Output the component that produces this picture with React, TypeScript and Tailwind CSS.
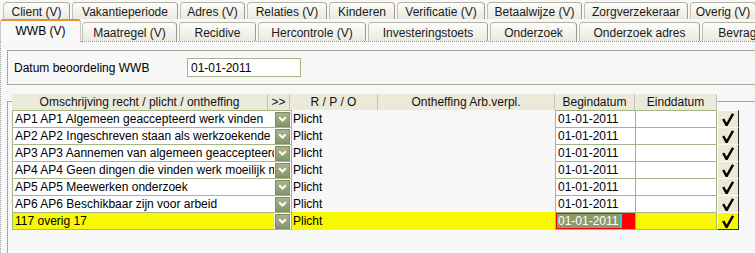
import React from 'react'
import clsx from 'clsx'

const topTabs = [
  { label: 'Client (V)', w: 'w-[67px]' },
  { label: 'Vakantieperiode', w: 'w-[106px]' },
  { label: 'Adres (V)', w: 'w-[65px]' },
  { label: 'Relaties (V)', w: 'w-[80px]' },
  { label: 'Kinderen', w: 'w-[66px]' },
  { label: 'Verificatie (V)', w: 'w-[88px]' },
  { label: 'Betaalwijze (V)', w: 'w-[95px]' },
  { label: 'Zorgverzekeraar', w: 'w-[104px]' },
  { label: 'Overig (V)', w: 'w-[66px]' },
]

const subTabs = [
  { label: 'Maatregel (V)', w: 'w-[95px]' },
  { label: 'Recidive', w: 'w-[77px]' },
  { label: 'Hercontrole (V)', w: 'w-[108px]' },
  { label: 'Investeringstoets', w: 'w-[120px]' },
  { label: 'Onderzoek', w: 'w-[87px]' },
  { label: 'Onderzoek adres', w: 'w-[121px]' },
  { label: 'Bevragingen', w: 'w-[100px]' },
]

const columns = [
  { label: 'Omschrijving recht / plicht / ontheffing', w: 'w-[256px]' },
  { label: '>>', w: 'w-[22px]' },
  { label: 'R / P / O', w: 'w-[88px]' },
  { label: 'Ontheffing Arb.verpl.', w: 'w-[177px]' },
  { label: 'Begindatum', w: 'w-[80px]' },
  { label: 'Einddatum', w: 'w-[82px]' },
]

const rows = [
  'AP1 AP1 Algemeen geaccepteerd werk vinden',
  'AP2 AP2 Ingeschreven staan als werkzoekende',
  'AP3 AP3 Aannemen van algemeen geaccepteerd werk',
  'AP4 AP4 Geen dingen die vinden werk moeilijk maken',
  'AP5 AP5 Meewerken onderzoek',
  'AP6 AP6 Beschikbaar zijn voor arbeid',
  '117 overig 17',
]

function Tab({ label, w }: { label: string; w: string }) {
  return (
    <div
      className={clsx(
        'flex h-full shrink-0 items-center justify-center overflow-hidden whitespace-nowrap rounded-t-[4px] border border-b-0 border-l-[#c2c0b5] border-r-[#9c9a8f] border-t-[#b3b1a6] bg-linear-to-b from-[#fdfdfb] to-[#eae9e0] pt-px leading-none text-[#1a1a1a]',
        w
      )}
    >
      {label}
    </div>
  )
}

function Chevron() {
  return (
    <svg width="9" height="6" viewBox="0 0 9 6">
      <path d="M1.2 1.2 L4.5 4.5 L7.8 1.2" fill="none" stroke="white" strokeWidth="2" />
    </svg>
  )
}

function Check() {
  return (
    <svg width="12" height="13" viewBox="0 0 12 13">
      <path d="M1.2 6 L4.6 12.2 L11 0.8" fill="none" stroke="black" strokeWidth="2.4" strokeLinejoin="miter" />
    </svg>
  )
}

export default function App() {
  return (
    <div className="flex h-[253px] w-[755px] flex-col overflow-hidden bg-[#f7f7f7] font-['Liberation_Sans',Arial,sans-serif] text-[12px] text-black">
      <div className="flex h-[19px] shrink-0 gap-[2px] pl-[3px] pt-[2px]">
        {topTabs.map((t) => (
          <Tab key={t.label} label={t.label} w={t.w} />
        ))}
      </div>

      <div className="flex h-[23px] shrink-0">
        <div className="flex h-[23px] w-[81px] shrink-0 items-center justify-center rounded-t-[3px] border-x border-t-2 border-dotted border-x-[#9a9a9a] border-t-[#e8902f] bg-[#f9f9f9] pb-[2px] leading-none [border-top-style:solid]">
          WWB (V)
        </div>
        <div className="flex flex-1 items-end gap-[2px] overflow-hidden border-b border-dotted border-[#9a9a9a] pl-px">
          {subTabs.map((t) => (
            <div key={t.label} className="h-[19px]">
              <Tab label={t.label} w={t.w} />
            </div>
          ))}
        </div>
      </div>

      <div className="flex-1 border-l border-dotted border-[#9a9a9a] pl-[6px] pt-[8px]">
        <div className="flex h-[35px] items-center border-y border-l border-[#aca899] pl-[6px]">
          <span className="w-[173px] leading-none">Datum beoordeling WWB</span>
          <div className="flex h-[19px] w-[114px] items-center border border-[#a5b785] bg-white pl-[3px] leading-none">
            01-01-2011
          </div>
        </div>

        <div className="mt-[16px] h-[200px] border-l border-t border-[#aca899] pl-[4px]">
          <div className="-mt-[8px] flex h-[16px] w-[705px] bg-[#ebeada]">
            {columns.map((c) => (
              <div
                key={c.label}
                className={clsx(
                  'flex items-center justify-center border-r border-[#c4c2b2] leading-none text-[#111]',
                  c.w
                )}
              >
                {c.label}
              </div>
            ))}
          </div>

          {rows.map((label, i) => {
            const active = i === rows.length - 1
            return (
              <div key={label} className={clsx('flex h-[18px]', i > 0 && '-mt-px')}>
                <div className="flex w-[280px] shrink-0 items-center border border-[#a5b785] bg-white">
                  <div
                    className={clsx(
                      'flex h-full w-[261px] min-w-0 shrink-0 items-center overflow-hidden whitespace-nowrap pl-[2px] leading-none',
                      active ? 'bg-[#f8f800]' : 'bg-white'
                    )}
                  >
                    {label}
                  </div>
                  <div className="ml-px flex h-[15px] w-[15px] shrink-0 items-center justify-center border border-[#7f8c66] bg-linear-to-b from-[#a8b38e] to-[#87966a]">
                    <Chevron />
                  </div>
                </div>
                <div
                  className={clsx(
                    'flex w-[263px] shrink-0 items-center pl-px leading-none',
                    active && 'bg-[#f8f800]'
                  )}
                >
                  Plicht
                </div>
                <div
                  className={clsx(
                    'flex w-[81px] shrink-0 items-center border border-[#a5b785] leading-none',
                    active ? 'bg-[#ff0000] pl-px' : 'bg-white pl-[2px]'
                  )}
                >
                  {active ? (
                    <>
                      <span className="flex h-[14px] items-center bg-[#8c9a6c] px-px text-white">01-01-2011</span>
                      <span className="h-[14px] w-[2px] bg-[#19d6ee]" />
                    </>
                  ) : (
                    '01-01-2011'
                  )}
                </div>
                <div
                  className={clsx(
                    'w-[81px] shrink-0 border border-l-0 border-[#a5b785]',
                    active ? 'bg-[#f8f800]' : 'bg-white'
                  )}
                />
                <div
                  className={clsx(
                    'flex w-[22px] shrink-0 items-center justify-center border border-b-[#303030] border-l-[#fbfbf6] border-r-[#303030] border-t-[#fbfbf6]',
                    active ? 'bg-[#f8f800]' : 'bg-[#ece9d8]'
                  )}
                >
                  <Check />
                </div>
              </div>
            )
          })}
        </div>
      </div>
    </div>
  )
}
